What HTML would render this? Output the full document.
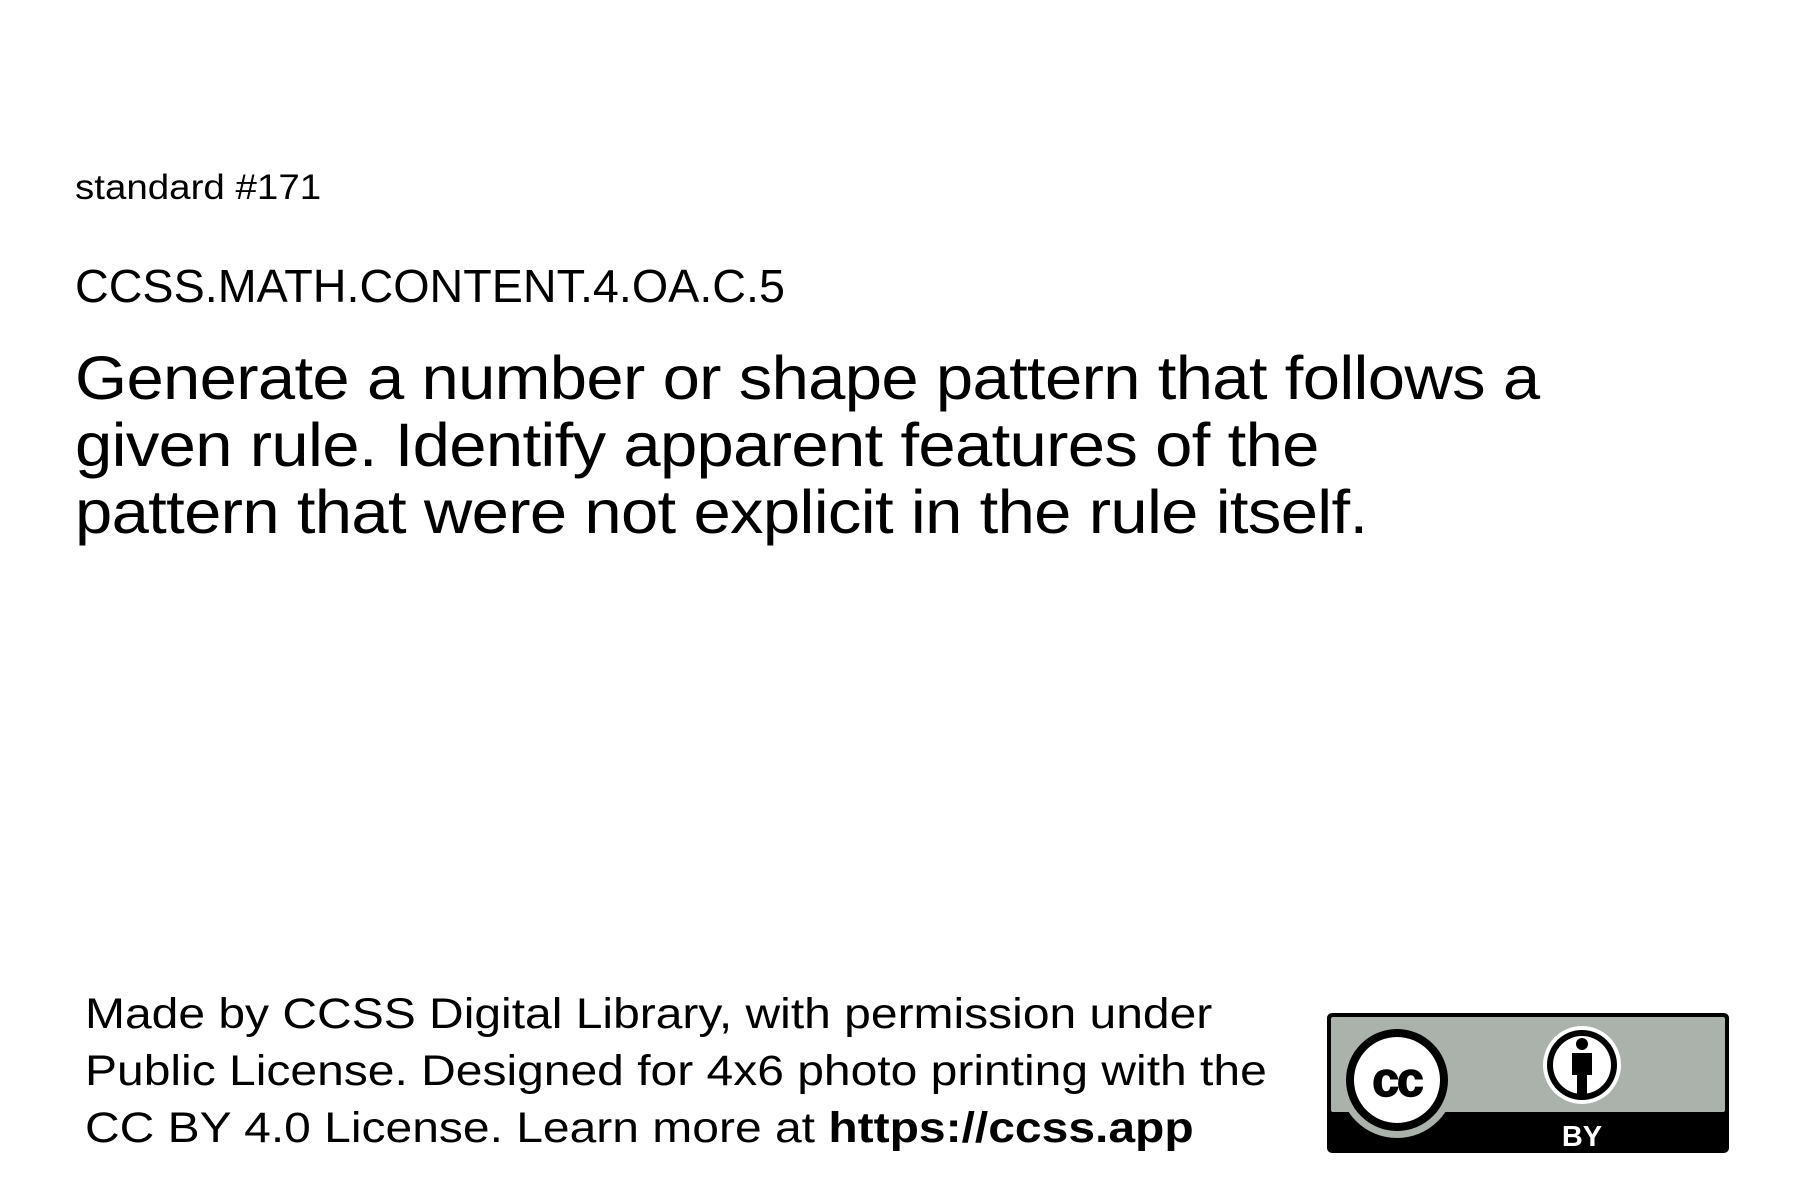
<!DOCTYPE html>
<html><head><meta charset="utf-8"><style>
html,body{margin:0;padding:0;background:#fff;}
body{width:1800px;height:1200px;position:relative;overflow:hidden;font-family:"Liberation Sans",sans-serif;color:#000;}
.t{position:absolute;white-space:nowrap;transform-origin:0 0;}
</style></head><body>
<div class="t" style="left:75px;top:168px;font-size:35px;line-height:40px;transform:scaleX(1.1);">standard #171</div>
<div class="t" style="left:75px;top:259px;font-size:46px;line-height:54px;transform:scaleX(1.015);">CCSS.MATH.CONTENT.4.OA.C.5</div>
<div class="t" style="left:75px;top:345px;font-size:61px;line-height:67px;letter-spacing:-0.6px;transform:scaleX(1.098);">Generate a number or shape pattern that follows a<br>given rule. Identify apparent features of the<br>pattern that were not explicit in the rule itself.</div>
<div class="t" style="left:85px;top:986px;font-size:43px;line-height:57px;transform:scaleX(1.116);">Made by CCSS Digital Library, with permission under<br>Public License. Designed for 4x6 photo printing with the<br>CC BY 4.0 License. Learn more at <b>https://ccss.app</b></div>
<svg style="position:absolute;left:1325px;top:1011px" width="406" height="144" viewBox="0 0 406 144">
<rect x="2" y="2" width="402" height="140" rx="5" fill="#000"/>
<rect x="6" y="6" width="394" height="95" rx="2" fill="#aab2ab"/>
<circle cx="72" cy="69" r="58" fill="#aab2ab"/>
<circle cx="72" cy="69" r="51" fill="#000"/>
<circle cx="72" cy="69" r="43" fill="#fff"/>
<text x="72" y="85" text-anchor="middle" font-family="Liberation Sans" font-weight="bold" font-size="48" letter-spacing="-2" fill="#000" stroke="#000" stroke-width="1.5">cc</text>
<circle cx="257" cy="54" r="39" fill="#fff"/>
<circle cx="257" cy="54" r="35" fill="#000"/>
<circle cx="257" cy="54" r="29" fill="#fff"/>
<circle cx="257" cy="33" r="6" fill="#000"/>
<path d="M247 42h20v22h-5v20h-10v-20h-5z" fill="#000"/>
<text x="257" y="135" text-anchor="middle" font-family="Liberation Sans" font-weight="bold" font-size="29" fill="#fff">BY</text>
</svg>
</body></html>
